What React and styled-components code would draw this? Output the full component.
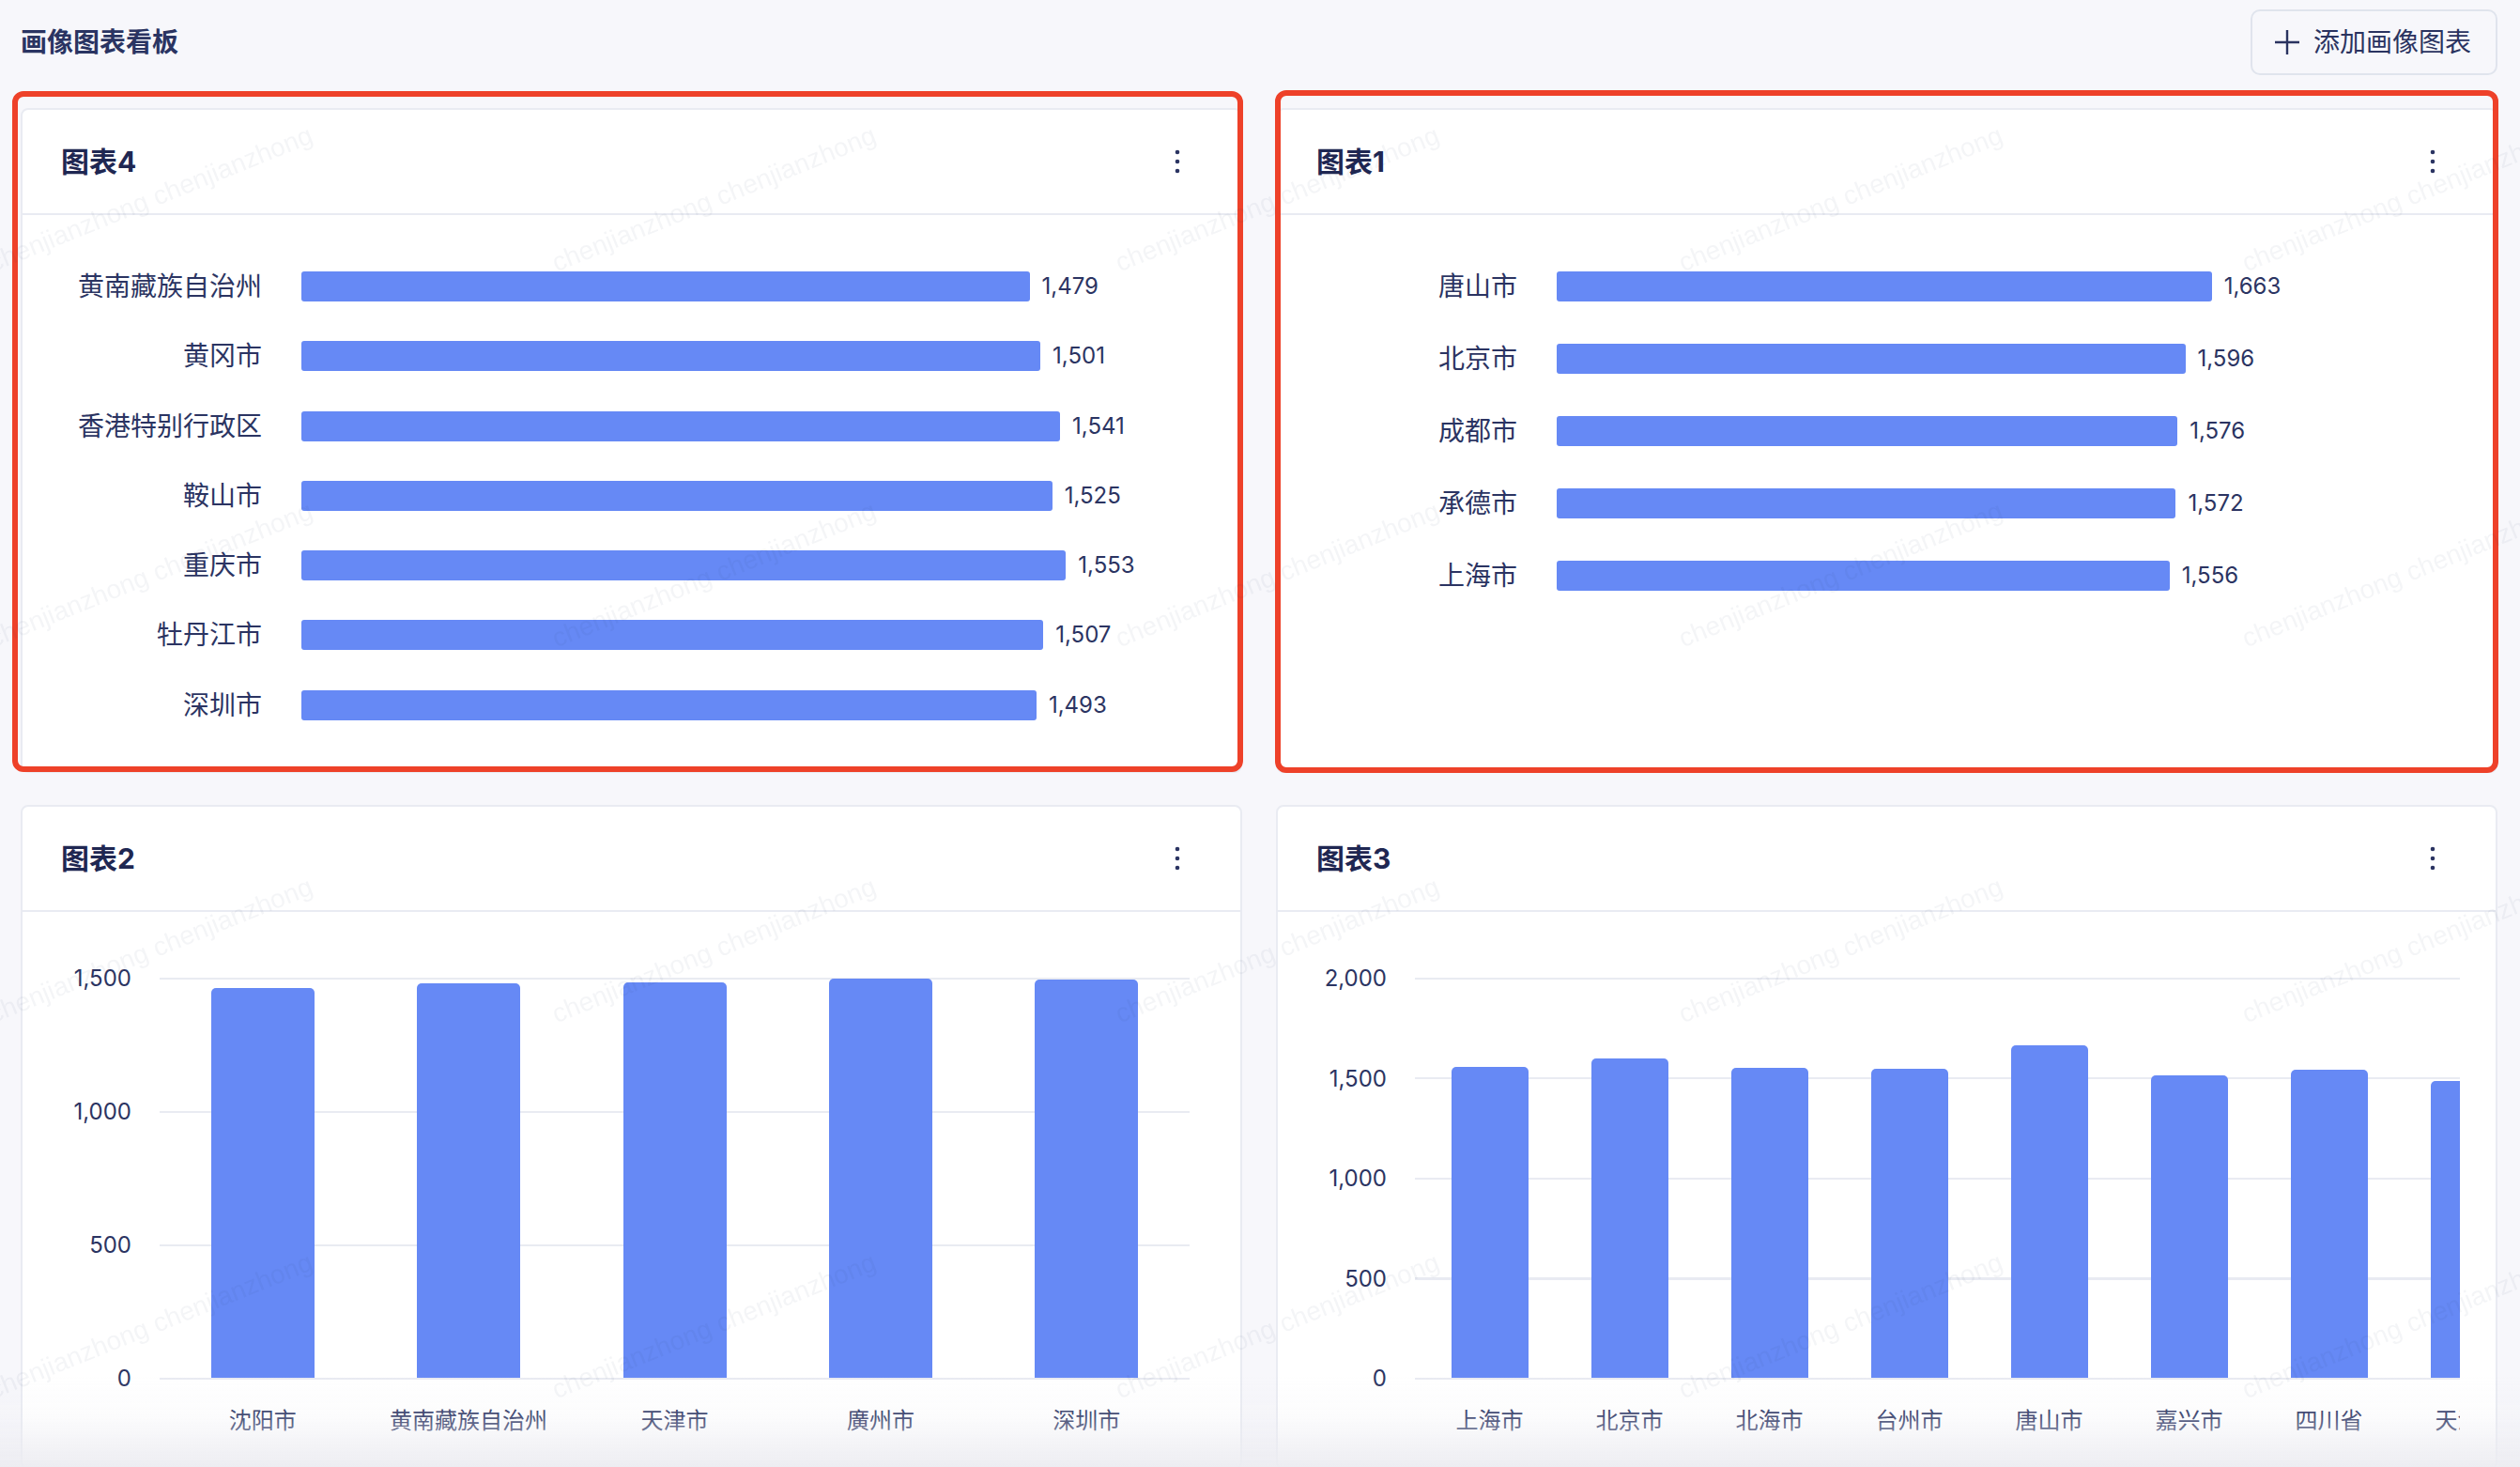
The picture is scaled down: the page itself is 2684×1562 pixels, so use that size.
import React from "react";
import styled, { createGlobalStyle } from "styled-components";

const NAVY = "#2b3462";
const BLUE = "#6689f5";
const LINE = "#e9ebf2";

const GlobalStyle = createGlobalStyle`
  html, body { margin: 0; padding: 0; background: #f7f7fb; overflow: hidden; }
  body { font-family: "Inter", "Noto Sans CJK SC", sans-serif; color: ${NAVY}; }
  * { box-sizing: border-box; }
`;

const Page = styled.div`
  height: 100vh;
  padding: 0 24px 0 22px;
`;

const Header = styled.header`
  height: 90px;
  display: flex;
  align-items: center;
  justify-content: space-between;
`;

const PageTitle = styled.h1`
  margin: 0;
  font-size: 28px;
  font-weight: 600;
  line-height: 36px;
  color: #2a3462;
`;

const AddButton = styled.button`
  display: flex;
  align-items: center;
  gap: 14px;
  height: 70px;
  padding: 0 26px 0 23px;
  border: 2px solid #e0e4ed;
  border-radius: 10px;
  background: #f7f7fb;
  font-family: inherit;
  font-size: 28px;
  line-height: 1;
  color: #2a3360;
`;

const Grid = styled.div`
  margin-top: 25px;
  display: grid;
  grid-template-columns: 1fr 1fr;
  grid-auto-rows: 708px;
  column-gap: 36px;
  row-gap: 34px;
`;

const CardWrap = styled.div`
  position: relative;
  min-width: 0;
`;

const Highlight = styled.div`
  position: absolute;
  pointer-events: none;
  z-index: 5;
  top: ${(p) => p.$t}px;
  left: ${(p) => p.$l}px;
  right: ${(p) => p.$r}px;
  bottom: ${(p) => p.$b}px;
  border: 6px solid #ee4129;
  border-radius: 12px;
`;

const Card = styled.section`
  height: 100%;
  background: #fff;
  border: 2px solid ${LINE};
  border-radius: 8px;
  display: flex;
  flex-direction: column;
  overflow: hidden;
`;

const CardHeader = styled.div`
  flex: none;
  height: 112px;
  border-bottom: 2px solid ${LINE};
  display: flex;
  align-items: center;
  justify-content: space-between;
  padding: 0 64px 0 41px;
`;

const CardTitle = styled.h2`
  margin: 0;
  font-size: 30px;
  font-weight: 700;
  line-height: 40px;
  color: #1f2752;
`;

const KebabButton = styled.span`
  display: flex;
  width: 6px;
  height: 26px;
`;

const Kebab = () => (
  <KebabButton>
    <svg width="6" height="26" viewBox="0 0 6 26">
      <circle cx="3" cy="3" r="2.3" fill={NAVY} />
      <circle cx="3" cy="13" r="2.3" fill={NAVY} />
      <circle cx="3" cy="23" r="2.3" fill={NAVY} />
    </svg>
  </KebabButton>
);

/* ---------- horizontal bar chart ---------- */
const HChart = styled.div`
  padding-top: ${(p) => 76 - p.$band / 2}px;
`;

const HRow = styled.div`
  height: ${(p) => p.$band}px;
  display: grid;
  grid-template-columns: 255px 1fr;
  column-gap: 42px;
  align-items: center;
`;

const HLabel = styled.div`
  text-align: right;
  font-size: 28px;
  line-height: 36px;
  white-space: nowrap;
  color: ${NAVY};
`;

const HTrack = styled.div`
  display: flex;
  align-items: center;
`;

const HBar = styled.div`
  flex: none;
  height: 32px;
  border-radius: 3px;
  background: ${BLUE};
`;

const HValue = styled.span`
  margin-left: 13px;
  font-size: 24px;
  line-height: 30px;
  color: ${NAVY};
`;

const fmt = (v) => v.toLocaleString("en-US");

const HorizontalChart = ({ data, max, band }) => (
  <HChart $band={band}>
    {data.map(([name, v]) => (
      <HRow key={name} $band={band}>
        <HLabel>{name}</HLabel>
        <HTrack>
          <HBar style={{ width: `${(v / max) * 839}px` }} />
          <HValue>{fmt(v)}</HValue>
        </HTrack>
      </HRow>
    ))}
  </HChart>
);

/* ---------- vertical bar chart ---------- */
const PLOT_H = 426;

const VChart = styled.div`
  padding: 70px ${(p) => p.$padRight}px 0 0;
  display: grid;
  grid-template-columns: 116px 1fr;
  column-gap: 30px;
`;

const YAxis = styled.div`
  height: ${PLOT_H + 2}px;
  display: flex;
  flex-direction: column;
  justify-content: space-between;
`;

const YTick = styled.div`
  height: 2px;
  display: flex;
  align-items: center;
  justify-content: flex-end;
  font-size: 24px;
  line-height: 30px;
  white-space: nowrap;
  color: ${NAVY};
`;

const PlotClip = styled.div`
  min-width: 0;
  overflow: hidden;
`;

const Plot = styled.div`
  height: ${PLOT_H + 2}px;
  display: flex;
  align-items: flex-end;
  padding: 0 0 2px ${(p) => p.$padLeft}px;
  background: repeating-linear-gradient(
    to bottom,
    ${LINE} 0px,
    ${LINE} 2px,
    transparent 2px,
    transparent ${(p) => p.$step}px
  );
`;

const Band = styled.div`
  flex: ${(p) => (p.$w ? `0 0 ${p.$w}px` : "1 1 0")};
  min-width: 0;
  display: flex;
  justify-content: center;
  align-items: flex-end;
`;

const VBar = styled.div`
  flex: none;
  width: ${(p) => p.$bw}px;
  border-radius: 5px 5px 0 0;
  background: ${BLUE};
`;

const XAxis = styled.div`
  display: flex;
  margin-top: 28px;
  padding-left: ${(p) => p.$padLeft}px;
`;

const XLabel = styled.div`
  flex: ${(p) => (p.$w ? `0 0 ${p.$w}px` : "1 1 0")};
  min-width: 0;
  display: flex;
  justify-content: center;
  font-size: 24px;
  line-height: 32px;
  white-space: nowrap;
  color: ${NAVY};
`;

const VerticalChart = ({ data, ticks, bandW, barW, padRight, padLeft }) => {
  const max = ticks[0];
  const step = PLOT_H / (ticks.length - 1);
  return (
    <VChart $padRight={padRight}>
      <YAxis>
        {ticks.map((t) => (
          <YTick key={t}>{fmt(t)}</YTick>
        ))}
      </YAxis>
      <PlotClip>
        <Plot $step={step} $padLeft={padLeft}>
          {data.map(([name, v]) => (
            <Band key={name} $w={bandW}>
              <VBar $bw={barW} style={{ height: `${(v / max) * PLOT_H}px` }} />
            </Band>
          ))}
        </Plot>
        <XAxis $padLeft={padLeft}>
          {data.map(([name]) => (
            <XLabel key={name} $w={bandW}>
              {name}
            </XLabel>
          ))}
        </XAxis>
      </PlotClip>
    </VChart>
  );
};

/* ---------- overlays ---------- */
const Watermark = styled.div`
  position: fixed;
  top: 12px;
  left: -140px;
  z-index: 20;
  pointer-events: none;
  display: grid;
  grid-template-columns: repeat(6, 600px);
  grid-auto-rows: 400px;
`;

const WmTile = styled.div`
  display: flex;
  align-items: center;
  justify-content: center;
`;

const WmText = styled.span`
  transform: rotate(-22deg);
  white-space: nowrap;
  font-family: "Liberation Sans", Arial, sans-serif;
  font-size: 28px;
  color: rgba(40, 50, 90, 0.05);
`;

const BottomFade = styled.div`
  position: fixed;
  left: 0;
  right: 0;
  bottom: 0;
  height: 100px;
  pointer-events: none;
  z-index: 15;
  background: linear-gradient(
    to bottom,
    rgba(236, 236, 241, 0) 0%,
    rgba(236, 236, 241, 0.15) 45%,
    rgba(236, 236, 241, 0.95) 100%
  );
`;

const PlusIcon = () => (
  <svg width="28" height="28" viewBox="0 0 28 28">
    <path d="M14 1v26M1 14h26" stroke="#2a3360" strokeWidth="2.4" fill="none" />
  </svg>
);

const chart4 = [
  ["黄南藏族自治州", 1479],
  ["黄冈市", 1501],
  ["香港特别行政区", 1541],
  ["鞍山市", 1525],
  ["重庆市", 1553],
  ["牡丹江市", 1507],
  ["深圳市", 1493],
];

const chart1 = [
  ["唐山市", 1663],
  ["北京市", 1596],
  ["成都市", 1576],
  ["承德市", 1572],
  ["上海市", 1556],
];

const chart2 = [
  ["沈阳市", 1463],
  ["黄南藏族自治州", 1479],
  ["天津市", 1484],
  ["廣州市", 1495],
  ["深圳市", 1493],
];

const chart3 = [
  ["上海市", 1556],
  ["北京市", 1596],
  ["北海市", 1550],
  ["台州市", 1545],
  ["唐山市", 1663],
  ["嘉兴市", 1510],
  ["四川省", 1542],
  ["天津市", 1484],
];

export default function App() {
  return (
    <>
      <GlobalStyle />
      <Page>
        <Header>
          <PageTitle>画像图表看板</PageTitle>
          <AddButton>
            <PlusIcon />
            添加画像图表
          </AddButton>
        </Header>
        <Grid>
          <CardWrap>
            <Highlight $t={-18} $l={-9} $r={-1} $b={1} />
            <Card>
              <CardHeader>
                <CardTitle>图表4</CardTitle>
                <Kebab />
              </CardHeader>
              <HorizontalChart data={chart4} max={1600} band={74.3} />
            </Card>
          </CardWrap>
          <CardWrap>
            <Highlight $t={-19} $l={-1} $r={-1} $b={0} />
            <Card>
              <CardHeader>
                <CardTitle>图表1</CardTitle>
                <Kebab />
              </CardHeader>
              <HorizontalChart data={chart1} max={2000} band={77} />
            </Card>
          </CardWrap>
          <CardWrap>
            <Card>
              <CardHeader>
                <CardTitle>图表2</CardTitle>
                <Kebab />
              </CardHeader>
              <VerticalChart
                data={chart2}
                ticks={[1500, 1000, 500, 0]}
                barW={110}
                padRight={54}
                padLeft={0}
              />
            </Card>
          </CardWrap>
          <CardWrap>
            <Card>
              <CardHeader>
                <CardTitle>图表3</CardTitle>
                <Kebab />
              </CardHeader>
              <VerticalChart
                data={chart3}
                ticks={[2000, 1500, 1000, 500, 0]}
                bandW={149}
                barW={82}
                padRight={38}
                padLeft={5}
              />
            </Card>
          </CardWrap>
        </Grid>
      </Page>
      <Watermark>
        {Array.from({ length: 24 }).map((_, i) => (
          <WmTile key={i}>
            <WmText>chenjianzhong chenjianzhong</WmText>
          </WmTile>
        ))}
      </Watermark>
      <BottomFade />
    </>
  );
}
